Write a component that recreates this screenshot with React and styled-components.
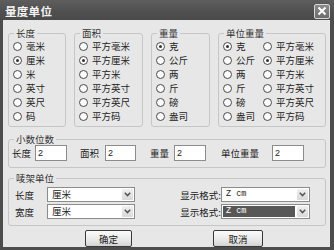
import React from "react";
import styled, { createGlobalStyle } from "styled-components";

const Global = createGlobalStyle`
  html, body { margin: 0; padding: 0; background: #4c4c4c; }
  * { box-sizing: border-box; }
  body { font-family: "Noto Sans CJK SC", "Noto Sans", sans-serif; }
`;

const Window = styled.div`
  width: 334px;
  height: 250px;
  background: #4d4d4d;
  display: flex;
  flex-direction: column;
  padding: 0 4px 3px 3px;
`;

const TitleBar = styled.div`
  height: 21px;
  margin: 0 -4px 0 -3px;
  padding: 2px 2px 0 5px;
  display: flex;
  align-items: center;
  justify-content: space-between;
  background: linear-gradient(#5e5e5e, #4f4f4f 60%, #4a4a4a);
`;

const Title = styled.span`
  color: #f4f4f4;
  font-size: 11.5px;
  font-weight: 700;
  letter-spacing: 0.3px;
`;

const Close = styled.div`
  width: 16px;
  height: 15px;
  margin-right: 2px;
  border: 1px solid #d6d6d6;
  border-radius: 2px;
  background: linear-gradient(#8a8a8a, #6c6c6c);
  display: flex;
  align-items: center;
  justify-content: center;
`;

const Body = styled.div`
  flex: 1;
  background: #e7e7e7;
  padding: 13px 4px 0 5px;
  display: flex;
  flex-direction: column;
  color: #222;
  font-size: 9.5px;
`;

const TopRow = styled.div`
  display: flex;
  justify-content: space-between;
  width: 318px;
`;

const Group = styled.div`
  position: relative;
  width: ${(p) => p.$w || 318}px;
  height: ${(p) => p.$h}px;
  margin-top: ${(p) => p.$mt || 0}px;
  border: 1px solid #c6c6c6;
  border-radius: 3px;
`;

const Legend = styled.span`
  position: absolute;
  top: -7px;
  left: 5px;
  padding: 0 2px;
  background: #e7e7e7;
  color: #333;
  line-height: 12px;
`;

const RadioList = styled.div`
  display: grid;
  grid-template-columns: ${(p) => (p.$two ? "40px auto" : "auto")};
  grid-auto-rows: 14px;
  padding: 5px 0 0 4px;
`;

const RadioItem = styled.div`
  display: flex;
  align-items: center;
  white-space: nowrap;
`;

const Circle = styled.span`
  width: 9px;
  height: 9px;
  margin-right: 4px;
  border-radius: 50%;
  border: 1px solid #4a4a4a;
  background: #fafafa;
  display: flex;
  align-items: center;
  justify-content: center;
  &::after {
    content: "";
    width: 3px;
    height: 3px;
    border-radius: 50%;
    background: ${(p) => (p.$on ? "#333" : "transparent")};
  }
`;

const FieldRow = styled.div`
  display: flex;
  align-items: center;
  padding: 5px 0 0 3px;
`;

const Label = styled.span`
  width: ${(p) => p.$w}px;
  margin-left: ${(p) => p.$ml || 0}px;
  text-align: ${(p) => p.$align || "left"};
  white-space: nowrap;
  flex: none;
`;

const TextBox = styled.div`
  width: ${(p) => p.$w}px;
  height: 16px;
  background: #fff;
  border: 1px solid #8c8c8c;
  padding-left: 2px;
  font-family: "Liberation Sans", sans-serif;
  font-size: 9px;
  line-height: 14px;
  color: #222;
`;

const SelGrid = styled.div`
  display: grid;
  grid-template-columns: 32px 88px 86px 89px;
  grid-auto-rows: 15px;
  row-gap: 2px;
  align-items: center;
  padding: 8px 0 0 6px;
`;

const Select = styled.div`
  height: 15px;
  border: 1px solid #8c8c8c;
  background: #fff;
  display: flex;
  align-items: stretch;
  padding: 1px;
`;

const SelText = styled.div`
  flex: 1;
  padding-left: 3px;
  font-family: ${(p) => (p.$mono ? '"Liberation Mono", monospace' : '"Noto Sans CJK SC", sans-serif')};
  font-size: ${(p) => (p.$mono ? 8.5 : 9.5)}px;
  line-height: 11px;
  background: ${(p) => (p.$hl ? "#575757" : "transparent")};
  color: ${(p) => (p.$hl ? "#fff" : "#222")};
  margin-right: ${(p) => (p.$hl ? 2 : 0)}px;
  white-space: pre;
`;

const Arrow = styled.div`
  width: 11px;
  background: linear-gradient(#f0f0f0, #d9d9d9);
  border-radius: 1px;
  display: flex;
  align-items: center;
  justify-content: center;
`;

const Buttons = styled.div`
  display: flex;
  gap: 81px;
  padding: 4px 0 0 77px;
`;

const Button = styled.div`
  width: ${(p) => p.$w}px;
  height: 17px;
  border: 1px solid #3a3a3a;
  border-radius: 2px;
  background: linear-gradient(#fbfbfb, #e4e4e4 70%, #d2d2d2);
  display: flex;
  align-items: center;
  justify-content: center;
  font-size: 9.5px;
  color: #222;
`;

const Chevron = () => (
  <svg width="7" height="5" viewBox="0 0 7 5">
    <path d="M0.8 0.8 L3.5 3.6 L6.2 0.8" fill="none" stroke="#555" strokeWidth="1.5" />
  </svg>
);

const Radio = ({ label, on }) => (
  <RadioItem>
    <Circle $on={on} />
    {label}
  </RadioItem>
);

const length = ["毫米", "厘米", "米", "英寸", "英尺", "码"];
const area = ["平方毫米", "平方厘米", "平方米", "平方英寸", "平方英尺", "平方码"];
const weight = ["克", "公斤", "两", "斤", "磅", "盎司"];

export default function App() {
  return (
    <>
      <Global />
      <Window>
        <TitleBar>
          <Title>量度单位</Title>
          <Close>
            <svg width="10" height="10" viewBox="0 0 10 10">
              <path d="M1.5 1.5 L8.5 8.5 M8.5 1.5 L1.5 8.5" stroke="#fff" strokeWidth="2" />
            </svg>
          </Close>
        </TitleBar>
        <Body>
          <TopRow>
            <Group $w={58} $h={94}>
              <Legend>长度</Legend>
              <RadioList>
                {length.map((t, i) => (
                  <Radio key={t} label={t} on={i === 1} />
                ))}
              </RadioList>
            </Group>
            <Group $w={69} $h={94}>
              <Legend>面积</Legend>
              <RadioList>
                {area.map((t, i) => (
                  <Radio key={t} label={t} on={i === 1} />
                ))}
              </RadioList>
            </Group>
            <Group $w={59} $h={94}>
              <Legend>重量</Legend>
              <RadioList>
                {weight.map((t, i) => (
                  <Radio key={t} label={t} on={i === 0} />
                ))}
              </RadioList>
            </Group>
            <Group $w={108} $h={94}>
              <Legend>单位重量</Legend>
              <RadioList $two>
                {weight.map((t, i) => (
                  <React.Fragment key={t}>
                    <Radio label={t} on={i === 0} />
                    <Radio label={area[i]} on={i === 1} />
                  </React.Fragment>
                ))}
              </RadioList>
            </Group>
          </TopRow>

          <Group $h={29} $mt={12}>
            <Legend>小数位数</Legend>
            <FieldRow>
              <Label $w={23}>长度</Label>
              <TextBox $w={32}>2</TextBox>
              <Label $w={25} $ml={13}>面积</Label>
              <TextBox $w={31}>2</TextBox>
              <Label $w={24} $ml={14}>重量</Label>
              <TextBox $w={32}>2</TextBox>
              <Label $w={51} $ml={15}>单位重量</Label>
              <TextBox $w={32}>2</TextBox>
            </FieldRow>
          </Group>

          <Group $h={48} $mt={10}>
            <Legend>唛架单位</Legend>
            <SelGrid>
              <Label>长度</Label>
              <Select>
                <SelText>厘米</SelText>
                <Arrow><Chevron /></Arrow>
              </Select>
              <Label $align="right">显示格式:</Label>
              <Select>
                <SelText $mono>Z cm</SelText>
                <Arrow><Chevron /></Arrow>
              </Select>
              <Label>宽度</Label>
              <Select>
                <SelText>厘米</SelText>
                <Arrow><Chevron /></Arrow>
              </Select>
              <Label $align="right">显示格式:</Label>
              <Select>
                <SelText $mono $hl>Z cm</SelText>
                <Arrow><Chevron /></Arrow>
              </Select>
            </SelGrid>
          </Group>

          <Buttons>
            <Button $w={47}>确定</Button>
            <Button $w={50}>取消</Button>
          </Buttons>
        </Body>
      </Window>
    </>
  );
}
